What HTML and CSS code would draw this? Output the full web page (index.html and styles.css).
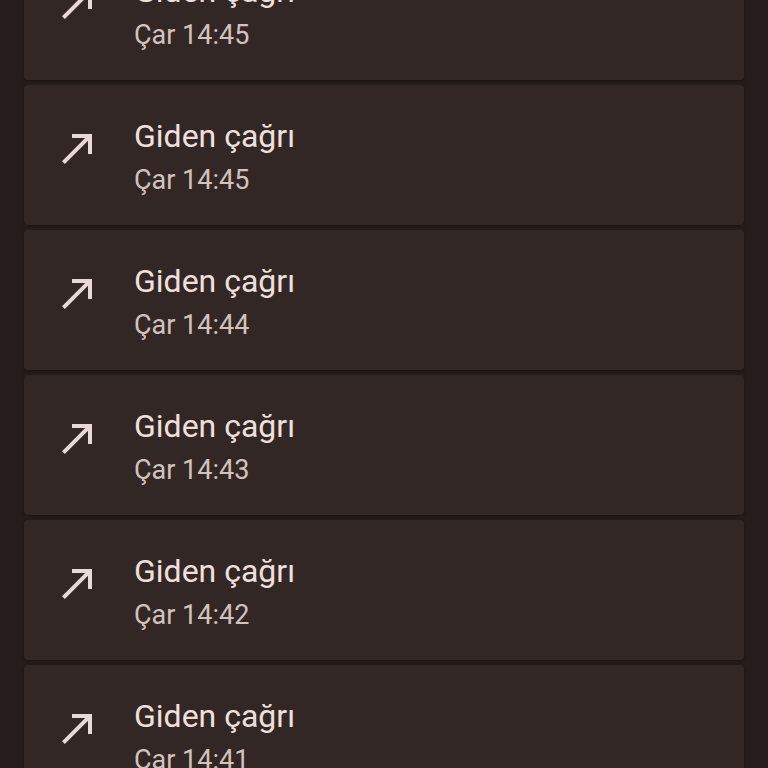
FILE: index.html
```html
<!DOCTYPE html>
<html lang="tr">
<head>
    <meta charset="UTF-8">
    <meta name="viewport" content="width=device-width, initial-scale=1.0">
    <title>Arama geçmişi</title>
    <link rel="stylesheet" href="styles.css">
</head>
<body>
    <main class="call-list">
        <div class="call-card">
            <svg class="call-icon" viewBox="0 0 24 24"><path d="M9 5v2h6.59L4 18.59 5.41 20 17 8.41V15h2V5z"/></svg>
            <div class="call-info">
                <div class="call-title">Giden çağrı</div>
                <div class="call-time">Çar 14:45</div>
            </div>
        </div>
        <div class="call-card">
            <svg class="call-icon" viewBox="0 0 24 24"><path d="M9 5v2h6.59L4 18.59 5.41 20 17 8.41V15h2V5z"/></svg>
            <div class="call-info">
                <div class="call-title">Giden çağrı</div>
                <div class="call-time">Çar 14:45</div>
            </div>
        </div>
        <div class="call-card">
            <svg class="call-icon" viewBox="0 0 24 24"><path d="M9 5v2h6.59L4 18.59 5.41 20 17 8.41V15h2V5z"/></svg>
            <div class="call-info">
                <div class="call-title">Giden çağrı</div>
                <div class="call-time">Çar 14:44</div>
            </div>
        </div>
        <div class="call-card">
            <svg class="call-icon" viewBox="0 0 24 24"><path d="M9 5v2h6.59L4 18.59 5.41 20 17 8.41V15h2V5z"/></svg>
            <div class="call-info">
                <div class="call-title">Giden çağrı</div>
                <div class="call-time">Çar 14:43</div>
            </div>
        </div>
        <div class="call-card">
            <svg class="call-icon" viewBox="0 0 24 24"><path d="M9 5v2h6.59L4 18.59 5.41 20 17 8.41V15h2V5z"/></svg>
            <div class="call-info">
                <div class="call-title">Giden çağrı</div>
                <div class="call-time">Çar 14:42</div>
            </div>
        </div>
        <div class="call-card">
            <svg class="call-icon" viewBox="0 0 24 24"><path d="M9 5v2h6.59L4 18.59 5.41 20 17 8.41V15h2V5z"/></svg>
            <div class="call-info">
                <div class="call-title">Giden çağrı</div>
                <div class="call-time">Çar 14:41</div>
            </div>
        </div>
    </main>
</body>
</html>
```

FILE: styles.css
```css
*{
    margin: 0;
    padding: 0;
    box-sizing: border-box;
}
html, body{
    height: 100%;
    overflow: hidden;
}
body{
    font-family: Roboto, "Noto Sans", sans-serif;
    background-color: #261c1b;
    color: #f0e0dd;
}
.call-list{
    display: flex;
    flex-direction: column;
    gap: 5px;
    padding-inline: 24px;
    margin-top: -60px;
}
.call-card{
    display: flex;
    align-items: flex-start;
    height: 140px;
    background-color: #332725;
    border-radius: 4px;
    box-shadow: 0 1px 3px rgba(0,0,0,0.35);
}
.call-icon{
    width: 48px;
    height: 48px;
    margin-left: 30px;
    margin-top: 39px;
    fill: #e9d9d6;
    flex-shrink: 0;
}
.call-info{
    margin-left: 32px;
    padding-top: 31px;
}
.call-title{
    font-size: 32px;
    line-height: 40px;
    color: #f0e0dd;
}
.call-time{
    font-size: 27px;
    line-height: 36px;
    margin-top: 6px;
    color: #d2c2be;
}
```
